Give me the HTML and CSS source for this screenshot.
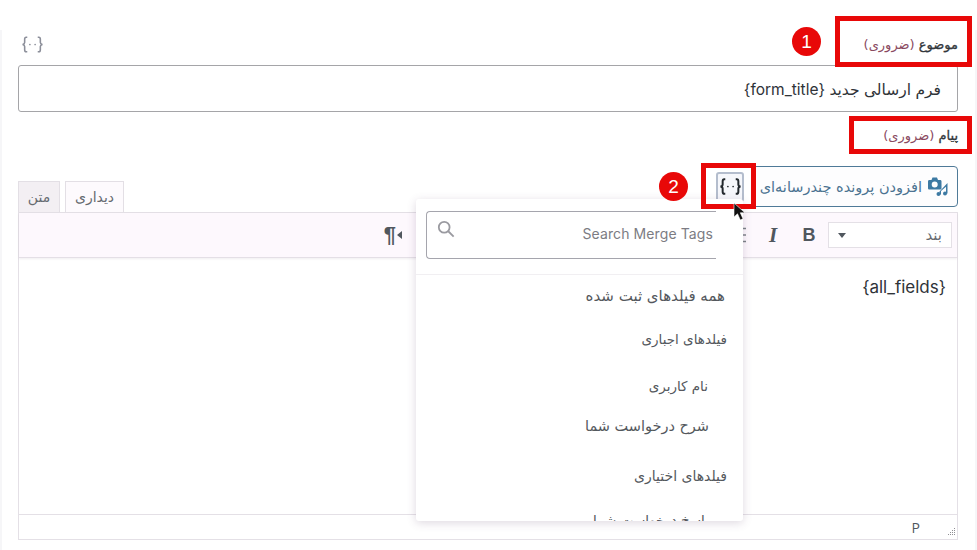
FILE: index.html
```html
<!DOCTYPE html>
<html lang="fa" dir="rtl">
<head>
  <meta charset="UTF-8">
  <title>Merge Tags</title>
  <link rel="stylesheet" href="styles.css">
</head>
<body>
  <div class="page">
    <!-- subject field -->
    <div class="field-head">
      <label class="field-label">موضوع <span class="required">(ضروری)</span></label>
      <svg class="tag-icon tag-icon-muted" viewBox="0 0 22 18"><path d="M6 2H5C3.800 2 3.500 2.800 3.500 4V7C3.500 8 3 8.700 1.500 9C3 9.300 3.500 10 3.500 11V14C3.500 15.200 3.800 16 5 16H6M16 2H17C18.200 2 18.500 2.800 18.500 4V7C18.500 8 19 8.700 20.500 9C19 9.300 18.500 10 18.500 11V14C18.500 15.200 18.200 16 17 16H16"/><circle cx="8.500" cy="9" r=".8"/><circle cx="13.500" cy="9" r=".8"/></svg>
    </div>
    <div class="subject-input">فرم ارسالی جدید {form_title}</div>

    <!-- message field -->
    <label class="field-label message-label">پیام <span class="required">(ضروری)</span></label>

    <div class="media-row">
      <button class="media-btn">
        <svg class="media-icon" viewBox="0 0 20 19"><path fill-rule="evenodd" d="M1.500 3H3.500L4.500 .5H9L10 3H12C13 3 13.500 3.500 13.500 4.500V11C13.500 12 13 12.500 12 12.500H1.500C.5 12.500 0 12 0 11V4.500C0 3.500 .5 3 1.500 3ZM6.700 4.500A3 3 0 1 0 6.701 10.500A3 3 0 1 0 6.700 4.500Z"/><path d="M11.500 14.500L19.500 6V16.500H18V9.800L13 14V17.500H11.500Z"/><circle cx="10.500" cy="17" r="2"/><circle cx="17" cy="16.500" r="2"/></svg>
        افزودن پرونده چندرسانه‌ای
      </button>
      <button class="tag-btn">
        <svg class="tag-icon" viewBox="0 0 22 18"><path d="M6 2H5C3.800 2 3.500 2.800 3.500 4V7C3.500 8 3 8.700 1.500 9C3 9.300 3.500 10 3.500 11V14C3.500 15.200 3.800 16 5 16H6M16 2H17C18.200 2 18.500 2.800 18.500 4V7C18.500 8 19 8.700 20.500 9C19 9.300 18.500 10 18.500 11V14C18.500 15.200 18.200 16 17 16H16"/><circle cx="8.500" cy="9" r=".8"/><circle cx="13.500" cy="9" r=".8"/></svg>
      </button>
    </div>

    <div class="tabs">
      <div class="tab tab-active">دیداری</div>
      <div class="tab">متن</div>
    </div>

    <div class="editor">
      <div class="toolbar">
        <div class="format-select"><span>بند</span><i class="caret"></i></div>
        <span class="tool tool-bold">B</span>
        <span class="tool tool-italic">I</span>
        <span class="tool tool-list">
          <svg viewBox="0 0 16 16"><path d="M2 1.500H14M6 8H14M2 14.500H14"/></svg>
        </span>
        <span class="tool-rtl">¶<i class="caret-left"></i></span>
      </div>
      <div class="editor-body">{all_fields}</div>
      <div class="statusbar">
        <span>p</span>
        <svg class="resize-grip" viewBox="0 0 10 10"><path d="M8 1h1v1H8zM6 3h1v1H6zM8 3h1v1H8zM4 5h1v1H4zM6 5h1v1H6zM8 5h1v1H8zM2 7h1v1H2zM4 7h1v1H4zM6 7h1v1H6zM8 7h1v1H8z"/></svg>
      </div>

      <!-- merge tag popup -->
      <div class="merge-popup">
        <div class="merge-search">
          <div class="merge-input">
            <span>Search Merge Tags</span>
            <svg class="search-icon" viewBox="0 0 20 20"><circle cx="8" cy="8" r="6"/><path d="M12.500 12.500L18.500 18.500"/></svg>
          </div>
        </div>
        <ul class="merge-list">
          <li class="merge-item item-all">همه فیلدهای ثبت شده</li>
          <li class="merge-item item-required">فیلدهای اجباری</li>
          <li class="merge-item item-user">نام کاربری</li>
          <li class="merge-item item-desc">شرح درخواست شما</li>
          <li class="merge-item item-optional">فیلدهای اختیاری</li>
          <li class="merge-item item-last">پاسخ درخواست شما</li>
        </ul>
      </div>
    </div>

    <!-- tutorial markers drawn over the screenshot -->
    <div class="mark mark-subject"></div>
    <div class="mark mark-message"></div>
    <div class="mark mark-tag"></div>
    <div class="badge badge-one">1</div>
    <div class="badge badge-two">2</div>
    <svg class="cursor" viewBox="0 0 14 20"><path d="M1 1V15L4.500 11.800L7.300 18L10 16.800L7.300 10.800H12Z"/></svg>
  </div>
</body>
</html>
```

FILE: styles.css
```css
* {
  box-sizing: border-box;
}

body {
  margin: 0;
  background-color: #ffffff;
  font-family: 'DejaVu Sans', sans-serif;
  color: #3c434a;
  overflow: hidden;
}

.page {
  position: relative;
  width: 977px;
  height: 550px;
  padding: 0 19px 0 18px;
  overflow: hidden;
}

.page::before,
.page::after {
  content: '';
  position: absolute;
  top: 30px;
  bottom: 0;
  width: 2px;
  background-color: #f6f6f8;
}

.page::before { right: 0; }
.page::after { left: 0; }

.field-head {
  display: flex;
  justify-content: space-between;
  align-items: center;
  height: 65px;
  padding-top: 24px;
}

.field-label {
  display: block;
  font-size: 13px;
  -webkit-text-stroke: 0.3px #32373c;
  color: #32373c;
}

.required {
  -webkit-text-stroke: 0;
  color: #8a4a5f;
}

.tag-icon {
  display: block;
  width: 23px;
  height: 19px;
  fill: #23282d;
}

.tag-icon path {
  fill: none;
  stroke: #23282d;
  stroke-width: 1.900;
}

.tag-icon-muted {
  margin-left: 3px;
  fill: #8c8f9a;
}

.tag-icon-muted path {
  stroke: #8c8f9a;
  stroke-width: 1.500;
}

.subject-input {
  height: 47px;
  padding: 0 16px;
  border: 1px solid #a5a5a8;
  border-radius: 3px;
  font-family: 'Inter', 'DejaVu Sans', sans-serif;
  font-size: 15.500px;
  line-height: 47px;
  color: #2f3338;
}

.message-label {
  margin-top: 16px;
  line-height: 16px;
}

.media-row {
  display: flex;
  align-items: center;
  height: 41px;
  margin-top: 22px;
  gap: 8px;
}

.media-btn {
  display: flex;
  align-items: center;
  gap: 6px;
  width: 206px;
  height: 41px;
  padding: 0 9px;
  background-color: #fdfdfe;
  border: 1px solid #4f7a98;
  border-radius: 4px;
  font-family: inherit;
  font-size: 14.500px;
  white-space: nowrap;
  color: #4b7391;
}

.media-icon {
  width: 20px;
  height: 19px;
  fill: #3d7aa3;
  flex-shrink: 0;
}

.tag-btn {
  display: flex;
  align-items: center;
  justify-content: center;
  width: 28px;
  height: 30px;
  padding: 0;
  background-color: #f6f7fb;
  border: 2px solid #b4bdcd;
  border-radius: 3px;
}

.tabs {
  display: flex;
  flex-direction: row-reverse;
  justify-content: flex-end;
  gap: 5px;
  width: 106px;
  height: 32px;
  margin-top: -26px;
  margin-bottom: -1px;
  margin-right: auto;
  direction: ltr;
}

.tab {
  width: 42px;
  height: 31px;
  background-color: #f3eff3;
  border: 1px solid #e3dfe5;
  border-bottom: none;
  font-size: 14px;
  line-height: 30px;
  text-align: center;
  color: #666a70;
}

.tab-active {
  width: 59px;
  height: 32px;
  background-color: #fdfafd;
}

.editor {
  position: relative;
  height: 328px;
  border: 1px solid #e4e0e6;
}

.toolbar {
  display: flex;
  align-items: center;
  height: 45px;
  padding: 0 5px;
  background-color: #fdf8fd;
  border-bottom: 1px solid #e4dfe6;
  box-shadow: 0 1px 2px rgba(60, 40, 70, 0.08);
}

.format-select {
  display: flex;
  justify-content: space-between;
  align-items: center;
  width: 124px;
  height: 26px;
  padding: 0 9px;
  background-color: #fff;
  border: 1px solid #e4e0e6;
  font-size: 15px;
  color: #666a70;
}

.caret {
  width: 0;
  height: 0;
  border-left: 4px solid transparent;
  border-right: 4px solid transparent;
  border-top: 5px solid #50575e;
}

.tool {
  width: 36px;
  font-family: 'Liberation Sans', sans-serif;
  font-size: 18px;
  text-align: center;
  color: #50575e;
}

.tool-bold {
  margin-right: 1px;
  font-weight: 700;
}

.tool-italic {
  font-family: 'Liberation Serif', serif;
  font-size: 21px;
  font-weight: 700;
  font-style: italic;
}

.tool-list svg {
  display: block;
  width: 16px;
  height: 16px;
  margin: 0 7px 0 auto;
  fill: none;
  stroke: #7d8288;
  stroke-width: 1.500;
}

.tool-rtl {
  display: flex;
  align-items: center;
  margin-right: 317px;
  direction: ltr;
  font-family: 'Liberation Sans', sans-serif;
  font-size: 22px;
  font-weight: 700;
  color: #50575e;
}

.caret-left {
  width: 0;
  height: 0;
  margin-left: 1px;
  border-top: 4px solid transparent;
  border-bottom: 4px solid transparent;
  border-right: 5px solid #50575e;
}

.editor-body {
  height: 256px;
  padding: 19px 11px;
  font-family: 'Inter', sans-serif;
  font-size: 17px;
  color: #2f3338;
}

.statusbar {
  display: flex;
  align-items: center;
  position: relative;
  height: 25px;
  padding: 0 37px 0 2px;
  border-top: 1px solid #e4e0e6;
  font-family: 'Open Sans', sans-serif;
  font-size: 14px;
  color: #50575e;
  text-transform: uppercase;
}

.resize-grip {
  position: absolute;
  right: 1px;
  bottom: 2px;
  width: 10px;
  height: 10px;
  fill: #8f8f94;
}

.merge-popup {
  position: absolute;
  top: -14px;
  left: 397px;
  width: 327px;
  height: 322px;
  overflow: hidden;
  background-color: #fff;
  border-radius: 3px;
  box-shadow: 0 2px 10px rgba(90, 60, 100, 0.2);
}

.merge-search {
  height: 76px;
  padding: 12px 27px 0 10px;
  border-bottom: 1px solid #f1eff2;
  direction: ltr;
}

.merge-input {
  display: flex;
  flex-direction: row-reverse;
  justify-content: space-between;
  height: 48px;
  padding: 0 3px 0 10px;
  border: 1px solid #a5a5ad;
  border-right: none;
  border-radius: 4px 0 0 4px;
  font-family: 'Inter', sans-serif;
  font-size: 14px;
  letter-spacing: 0.1px;
  line-height: 44px;
  color: #7c7c83;
}

.search-icon {
  width: 18px;
  height: 18px;
  margin-top: 8px;
  fill: none;
  stroke: #9a9aa0;
  stroke-width: 2;
}

.merge-list {
  margin: 0;
  padding: 0;
  list-style: none;
  font-size: 13.500px;
  color: #54585d;
}

.merge-item {
  height: 44px;
  line-height: 18px;
}

.item-all { margin-right: 18px; padding-top: 12px; font-size: 15px; }
.item-required { margin-right: 16px; padding-top: 11px; }
.item-user { margin-right: 35px; padding-top: 14px; }
.item-desc { margin-right: 34px; padding-top: 10px; height: 40px; font-size: 14.500px; }
.item-optional { margin-right: 16px; padding-top: 20px; height: 52px; font-size: 14px; }
.item-last { margin-right: 34px; padding-top: 12px; }

.mark {
  position: absolute;
  border: 5px solid #e80808;
}

.mark-subject {
  top: 16px;
  left: 835px;
  width: 137px;
  height: 51px;
}

.mark-message {
  top: 116px;
  left: 849px;
  width: 123px;
  height: 38px;
}

.mark-tag {
  top: 163px;
  left: 701px;
  width: 55px;
  height: 46px;
}

.badge {
  position: absolute;
  width: 29px;
  height: 29px;
  border-radius: 50%;
  background-color: #e80808;
  font-family: 'Liberation Sans', sans-serif;
  font-size: 19px;
  line-height: 29px;
  text-align: center;
  color: #fff;
}

.badge-one {
  top: 27px;
  left: 792px;
}

.badge-two {
  top: 172px;
  left: 659px;
}

.cursor {
  position: absolute;
  top: 202px;
  left: 733px;
  width: 14px;
  height: 20px;
  fill: #111;
  stroke: #fff;
  stroke-width: 0.600;
}
```
